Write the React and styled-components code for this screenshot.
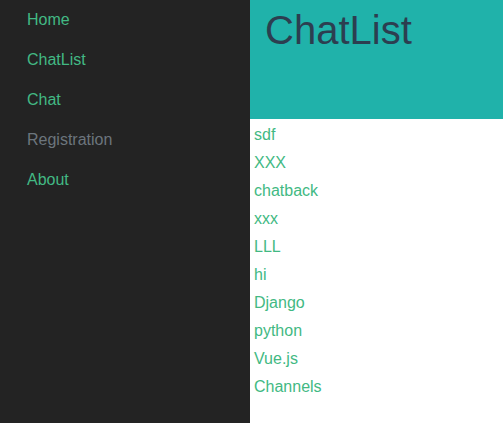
import React from 'react';
import styled, { createGlobalStyle } from 'styled-components';

const GlobalStyle = createGlobalStyle`
  html, body {
    margin: 0;
    padding: 0;
    height: 100%;
  }
  body {
    font-family: "Liberation Sans", Arial, sans-serif;
  }
`;

const Layout = styled.div`
  display: flex;
  height: 100vh;
`;

const Sidebar = styled.nav`
  width: 250px;
  flex-shrink: 0;
  background: #232323;
  display: flex;
  flex-direction: column;
`;

const NavLink = styled.a`
  display: block;
  padding-left: 27px;
  line-height: 40px;
  font-size: 16px;
  text-decoration: none;
  color: ${(p) => (p.disabled ? '#6c757d' : '#42b983')};
`;

const Main = styled.main`
  flex: 1;
  display: flex;
  flex-direction: column;
  background: #fff;
`;

const Header = styled.header`
  height: 119px;
  background: #20b2aa;
  padding: 7px 15px 0;
  box-sizing: border-box;
`;

const Title = styled.h1`
  margin: 0;
  font-size: 40px;
  font-weight: normal;
  line-height: 46px;
  color: #2c3e50;
`;

const List = styled.ul`
  list-style: none;
  margin: 0;
  padding: 2px 0 0 4px;
`;

const Item = styled.li`
  line-height: 28px;
  font-size: 16px;
  color: #42b983;
`;

const links = [
  { label: 'Home' },
  { label: 'ChatList' },
  { label: 'Chat' },
  { label: 'Registration', disabled: true },
  { label: 'About' },
];

const chats = ['sdf', 'XXX', 'chatback', 'xxx', 'LLL', 'hi', 'Django', 'python', 'Vue.js', 'Channels'];

export default function App() {
  return (
    <>
      <GlobalStyle />
      <Layout>
        <Sidebar>
          {links.map((l) => (
            <NavLink key={l.label} disabled={l.disabled}>
              {l.label}
            </NavLink>
          ))}
        </Sidebar>
        <Main>
          <Header>
            <Title>ChatList</Title>
          </Header>
          <List>
            {chats.map((c) => (
              <Item key={c}>{c}</Item>
            ))}
          </List>
        </Main>
      </Layout>
    </>
  );
}
